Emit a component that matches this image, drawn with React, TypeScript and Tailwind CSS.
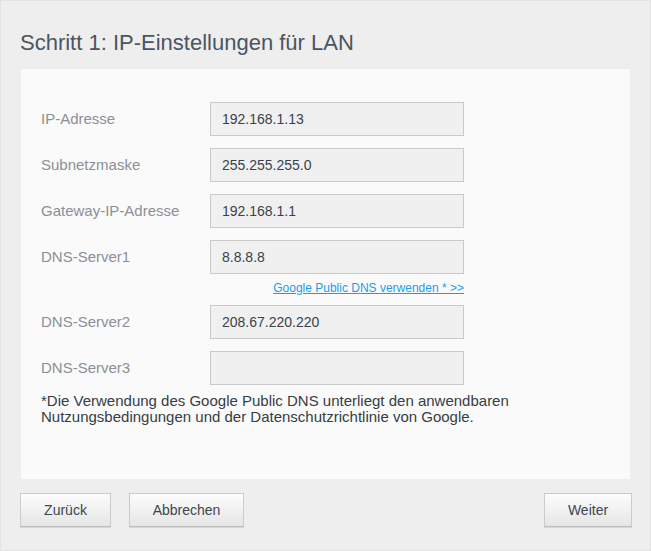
const fields = [
  { label: "IP-Adresse", value: "192.168.1.13" },
  { label: "Subnetzmaske", value: "255.255.255.0" },
  { label: "Gateway-IP-Adresse", value: "192.168.1.1" },
  { label: "DNS-Server1", value: "8.8.8.8" },
];

function Row({ label, value, className = "" }: { label: string; value: string; className?: string }) {
  return (
    <div className={`flex items-center ${className}`}>
      <label className="w-[169px] text-[15px] text-[#8b9096]">{label}</label>
      <input
        readOnly
        value={value}
        className="h-[34px] w-[254px] border border-[#cacaca] bg-[#f0f0f0] px-[11px] text-[14px] text-[#39424c] outline-none"
      />
    </div>
  );
}

function Button({ children, width }: { children: string; width: string }) {
  return (
    <button
      className={`${width} h-[34px] border border-[#cbcbcb] border-b-[#bdbdbd] bg-linear-to-b from-[#fdfdfd] to-[#e5e5e5] text-[14px] text-[#3c4650] shadow-[0_1px_0_#d6d6d6]`}
    >
      {children}
    </button>
  );
}

export default function App() {
  return (
    <div
      className="flex h-[551px] w-[651px] flex-col border border-[#e3e3e3] bg-[#eeeeee]"
      style={{ fontFamily: '"Liberation Sans", Arial, sans-serif' }}
    >
      <h1 className="h-[68px] pl-[19px] pt-[29px] text-[22px] leading-[26px] text-[#4a5562]">
        Schritt 1: IP-Einstellungen für LAN
      </h1>

      <div className="mx-[20px] h-[410px] bg-[#fafafa] pl-[20px] pt-[33px]">
        {fields.map((f, i) => (
          <Row key={f.label} label={f.label} value={f.value} className={i > 0 ? "mt-[12px]" : ""} />
        ))}
        <div className="mt-[6px] flex w-[423px] justify-end">
          <a href="#" className="text-[12px] leading-[16px] text-[#1b9cef] underline">
            Google Public DNS verwenden * &gt;&gt;
          </a>
        </div>
        <Row label="DNS-Server2" value="208.67.220.220" className="mt-[9px]" />
        <Row label="DNS-Server3" value="" className="mt-[12px]" />
        <p className="mt-[8px] text-[15px] leading-[16px] text-[#363d45]">
          *Die Verwendung des Google Public DNS unterliegt den anwendbaren
          <br />
          Nutzungsbedingungen und der Datenschutzrichtlinie von Google.
        </p>
      </div>

      <div className="ml-[19px] mr-[18px] mt-[14px] flex items-center">
        <Button width="w-[91px]">Zurück</Button>
        <div className="ml-[18px]">
          <Button width="w-[115px]">Abbrechen</Button>
        </div>
        <div className="ml-auto">
          <Button width="w-[88px]">Weiter</Button>
        </div>
      </div>
    </div>
  );
}
